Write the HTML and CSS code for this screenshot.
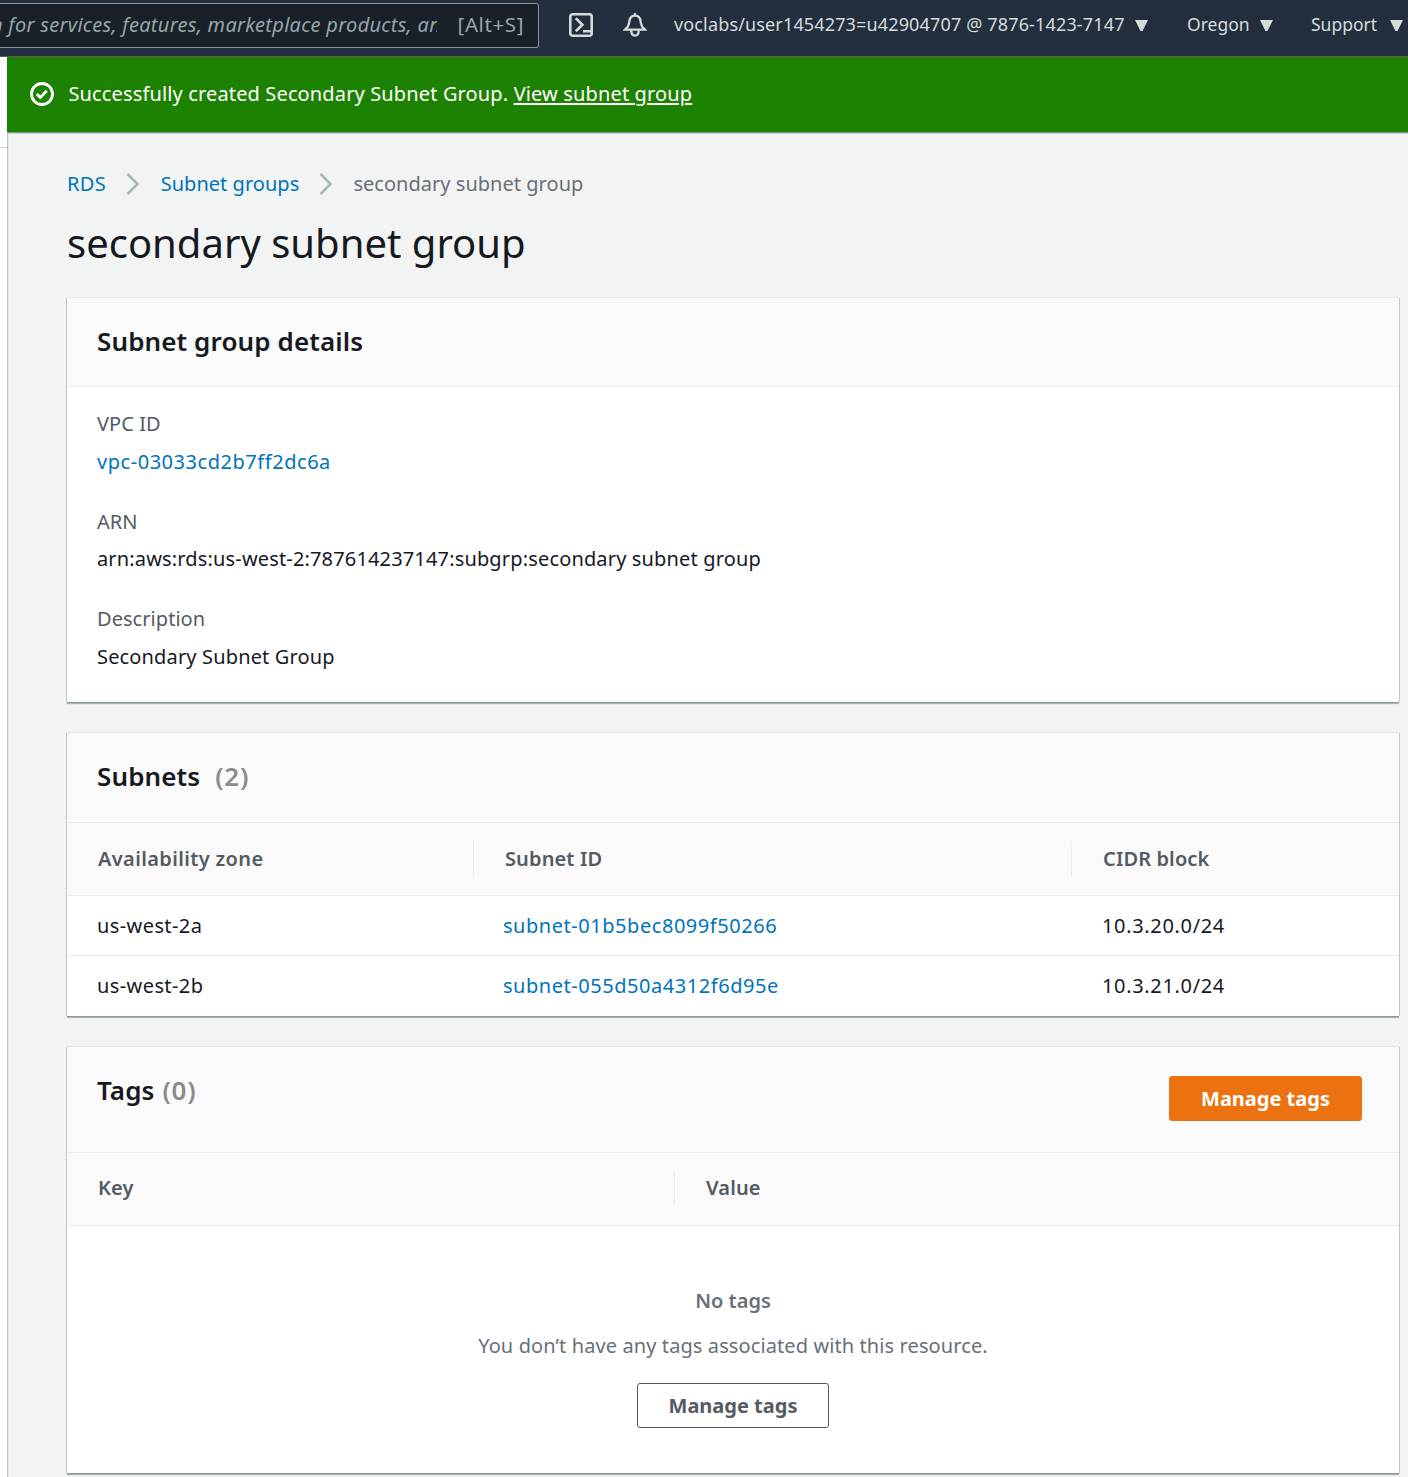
FILE: index.html
```html
<!DOCTYPE html>
<html lang="en">
<head>
<meta charset="utf-8">
<title>secondary subnet group</title>
<link rel="stylesheet" href="styles.css">
</head>
<body>
<header class="topnav">
  <div class="search">
    <div class="search-window"><span class="search-text">n for services, features, marketplace products, an</span></div>
    <span class="search-key">[Alt+S]</span>
  </div>
  <svg class="nav-icon shell" viewBox="0 0 24 24"><rect x="1.3" y="1.3" width="21.4" height="21.4" rx="2.5"/><path d="M6.800 5.200l6.600 6.500-6.600 6.500M14 18.300h8"/></svg>
  <svg class="nav-icon bell" viewBox="0 0 24 24"><path d="M12 0v2.500M2 16.700C4.600 14.500 6 12.500 6.300 9C6.600 5 8.500 2.700 12 2.700S17.400 5 17.700 9C18 12.500 19.400 14.500 22 16.700ZM8.200 17c0 3.600 1.300 5.600 3.800 5.600s3.800-2 3.800-5.600"/></svg>
  <nav class="nav-menus">
    <a class="menu account"><span>voclabs/user1454273=u42904707 @ 7876-1423-7147</span><i class="caret"></i></a>
    <a class="menu region"><span>Oregon</span><i class="caret"></i></a>
    <a class="menu support"><span>Support</span><i class="caret"></i></a>
  </nav>
</header>
<div class="layout">
  <aside class="side"><div class="side-head"></div></aside>
  <div class="page">
    <div class="flash">
      <svg class="flash-icon" viewBox="0 0 24 24"><circle cx="12" cy="12" r="10.500"/><path d="M6.800 12l3.500 3.500 6.500-6.800"/></svg>
      <p class="flash-text">Successfully created Secondary Subnet Group. <a>View subnet group</a></p>
    </div>
    <main class="content">
      <nav class="crumbs">
        <a class="crumb-rds">RDS</a>
        <svg class="chevron" viewBox="0 0 14 24"><path d="M1.500 2l10 10-10 10"/></svg>
        <a class="crumb-groups">Subnet groups</a>
        <svg class="chevron" viewBox="0 0 14 24"><path d="M1.500 2l10 10-10 10"/></svg>
        <span class="crumb-current">secondary subnet group</span>
      </nav>
      <h1 class="title">secondary subnet group</h1>

      <section class="panel details">
        <header class="panel-head"><h2>Subnet group details</h2></header>
        <dl class="fields">
          <div class="field"><dt>VPC ID</dt><dd><a class="link code">vpc-03033cd2b7ff2dc6a</a></dd></div>
          <div class="field"><dt>ARN</dt><dd class="value">arn:aws:rds:us-west-2:787614237147:subgrp:secondary subnet group</dd></div>
          <div class="field"><dt>Description</dt><dd class="value">Secondary Subnet Group</dd></div>
        </dl>
      </section>

      <section class="panel subnets">
        <header class="panel-head"><h2>Subnets</h2><span class="count">(2)</span></header>
        <div class="row thead"><b class="zone-head">Availability zone</b><b>Subnet ID</b><b>CIDR block</b></div>
        <div class="row"><span class="zone">us-west-2a</span><a class="link code">subnet-01b5bec8099f50266</a><span class="cidr">10.3.20.0/24</span></div>
        <div class="row"><span class="zone">us-west-2b</span><a class="link code">subnet-055d50a4312f6d95e</a><span class="cidr">10.3.21.0/24</span></div>
      </section>

      <section class="panel tags">
        <header class="panel-head"><h2>Tags</h2><span class="count">(0)</span><button class="btn primary">Manage tags</button></header>
        <div class="row thead"><b>Key</b><b>Value</b></div>
        <div class="empty">
          <b>No tags</b>
          <p>You don’t have any tags associated with this resource.</p>
          <button class="btn">Manage tags</button>
        </div>
      </section>
    </main>
  </div>
</div>
</body>
</html>
```
FILE: styles.css
```css
* { box-sizing: border-box; margin: 0; padding: 0; }
body {
  height: 1477px;
  overflow: hidden;
  background: #f2f3f3;
  color: #16191f;
  font: 20px/30px "Noto Sans", "Open Sans", sans-serif;
  white-space: nowrap;
}
.topnav {
  display: flex;
  height: 57px;
  background: #232f3e;
  border-bottom: 1px solid #545b64;
  color: #d5dbdb;
}
.search {
  display: flex;
  align-items: center;
  justify-content: space-between;
  flex: none;
  width: 539px;
  height: 45px;
  margin-top: 3px;
  padding: 0 14px 2px 0;
  background: #1a202a;
  border: 1px solid #879596;
  border-left: 0;
  border-radius: 0 3px 3px 0;
  color: #95a5a6;
}
.search-window { display: flex; width: 437px; overflow: hidden; }
.search-text { margin-left: -9px; font-style: italic; letter-spacing: 0.29px; }
.search-key { padding-bottom: 2px; font-size: 20.5px; letter-spacing: 0.6px; }
.nav-icon { flex: none; width: 24px; height: 24px; margin-top: 13px; fill: none; stroke: #d5dbdb; stroke-width: 2.6; }
.shell { margin-left: 30px; }
.bell { margin-left: 30px; stroke-width: 2.3; }
.nav-menus { display: flex; height: 49px; align-items: center; font-size: 17.5px; }
.menu { display: flex; align-items: center; justify-content: space-between; flex: none; }
.menu span { padding-bottom: 2px; }
.account { width: 474px; margin-left: 27px; font-size: 18px; letter-spacing: 0.15px; }
.region { width: 86px; margin-left: 39px; }
.support { width: 92px; margin-left: 38px; }
.caret { width: 13px; height: 11px; margin-top: 2px; background: #d5dbdb; clip-path: polygon(0 0, 100% 0, 58% 100%, 42% 100%); }

.layout { display: grid; grid-template-columns: 7px 1fr; height: 1420px; }
.side { background: #fff; }
.side-head { height: 91px; border-bottom: 1px solid #d5dbdb; }
.page { box-shadow: inset 1px 0 #bcc4c4, inset 2px 0 #e6e9e9; }
.flash {
  display: flex;
  align-items: center;
  gap: 14.5px;
  height: 75px;
  padding-left: 23px;
  background: #1d8102;
  box-shadow: 0 1px #879596, 0 2px #cdd1d3;
  color: #fff;
  letter-spacing: 0.14px;
}
.flash-icon { width: 24px; height: 24px; margin-bottom: 1px; fill: none; stroke: #fff; stroke-width: 2.8; }
.flash-text { margin-bottom: 2px; }
.flash-text a { text-decoration: underline; text-decoration-thickness: 2px; text-underline-offset: 2px; }

.content { padding: 37px 9px 0 60px; }
.crumbs { display: flex; align-items: center; height: 30px; color: #687078; letter-spacing: 0.03px; }
.crumbs a, .link { color: #0073bb; }
.crumb-rds { width: 59px; letter-spacing: 0.3px; }
.crumb-groups { width: 158px; }
.chevron { width: 14px; height: 24px; margin-right: 20.7px; fill: none; stroke: #aab7b8; stroke-width: 2.6; }
.title { height: 60px; margin: 15px 0 24px; font-size: 40px; line-height: 58px; font-weight: 400; }

.panel {
  margin-bottom: 31px;
  background: #fff;
  box-shadow: 0 -1px #e6e9e9, -1px 0 #c0c8c8, 1px 0 #c0c8c8, 0 1px #879596, 0 2px 1px #aab7b8;
}
.panel-head { display: flex; align-items: flex-start; height: 89px; padding: 27px 37px 0 30px; background: #fafafa; border-bottom: 1px solid #eaeded; }
h2, .count { font-size: 26px; line-height: 33px; font-weight: 600; letter-spacing: 0.12px; }
.count { margin-left: 8px; color: #8b8c8f; letter-spacing: 0.7px; }
.subnets .count { margin-left: 15px; }
.subnets .panel-head { height: 90px; }
.fields { height: 315px; padding: 22px 30px 0; }
.field { height: 97.5px; }
dt { margin-bottom: 7.5px; color: #545b64; letter-spacing: 0.05px; }
.value { letter-spacing: 0.155px; }
.code { letter-spacing: 0.54px; }
.zone { letter-spacing: 0.4px; }
.cidr { letter-spacing: 0.66px; }
.row { display: grid; align-items: center; height: 60px; border-bottom: 1px solid #eaeded; }
.row:last-child { border-bottom: 0; }
.subnets .row { grid-template-columns: 406px 599px 1fr; }
.subnets .thead { grid-template-columns: 406px 598px 1fr; }
.tags .row { grid-template-columns: 607px 1fr; }
.row > * { padding-left: 30px; }
.row > b { line-height: 36px; padding-left: 31px; font-weight: 600; letter-spacing: 0.12px; color: #545b64; }
.row > .zone-head { letter-spacing: 0.36px; }
.row > b + b { border-left: 1px solid #eaeded; }
.thead { height: 73px; padding-bottom: 1px; background: #fafafa; }
.tags .thead { padding-bottom: 2px; }
.tags .panel-head { height: 106px; }
.btn {
  width: 192px;
  height: 45px;
  background: #fff;
  border: 1px solid #545b64;
  border-radius: 3px;
  color: #545b64;
  font: 700 20px/30px "Noto Sans", sans-serif;
}
.primary { width: 193px; margin: 2px 0 0 auto; background: #ec7211; border-color: #ec7211; color: #fff; }
.empty { display: flex; flex-direction: column; align-items: center; height: 247px; padding-top: 60px; color: #687078; }
.empty b { font-weight: 600; }
.empty p { margin: 15px 0 22px; letter-spacing: 0.1px; }
```
